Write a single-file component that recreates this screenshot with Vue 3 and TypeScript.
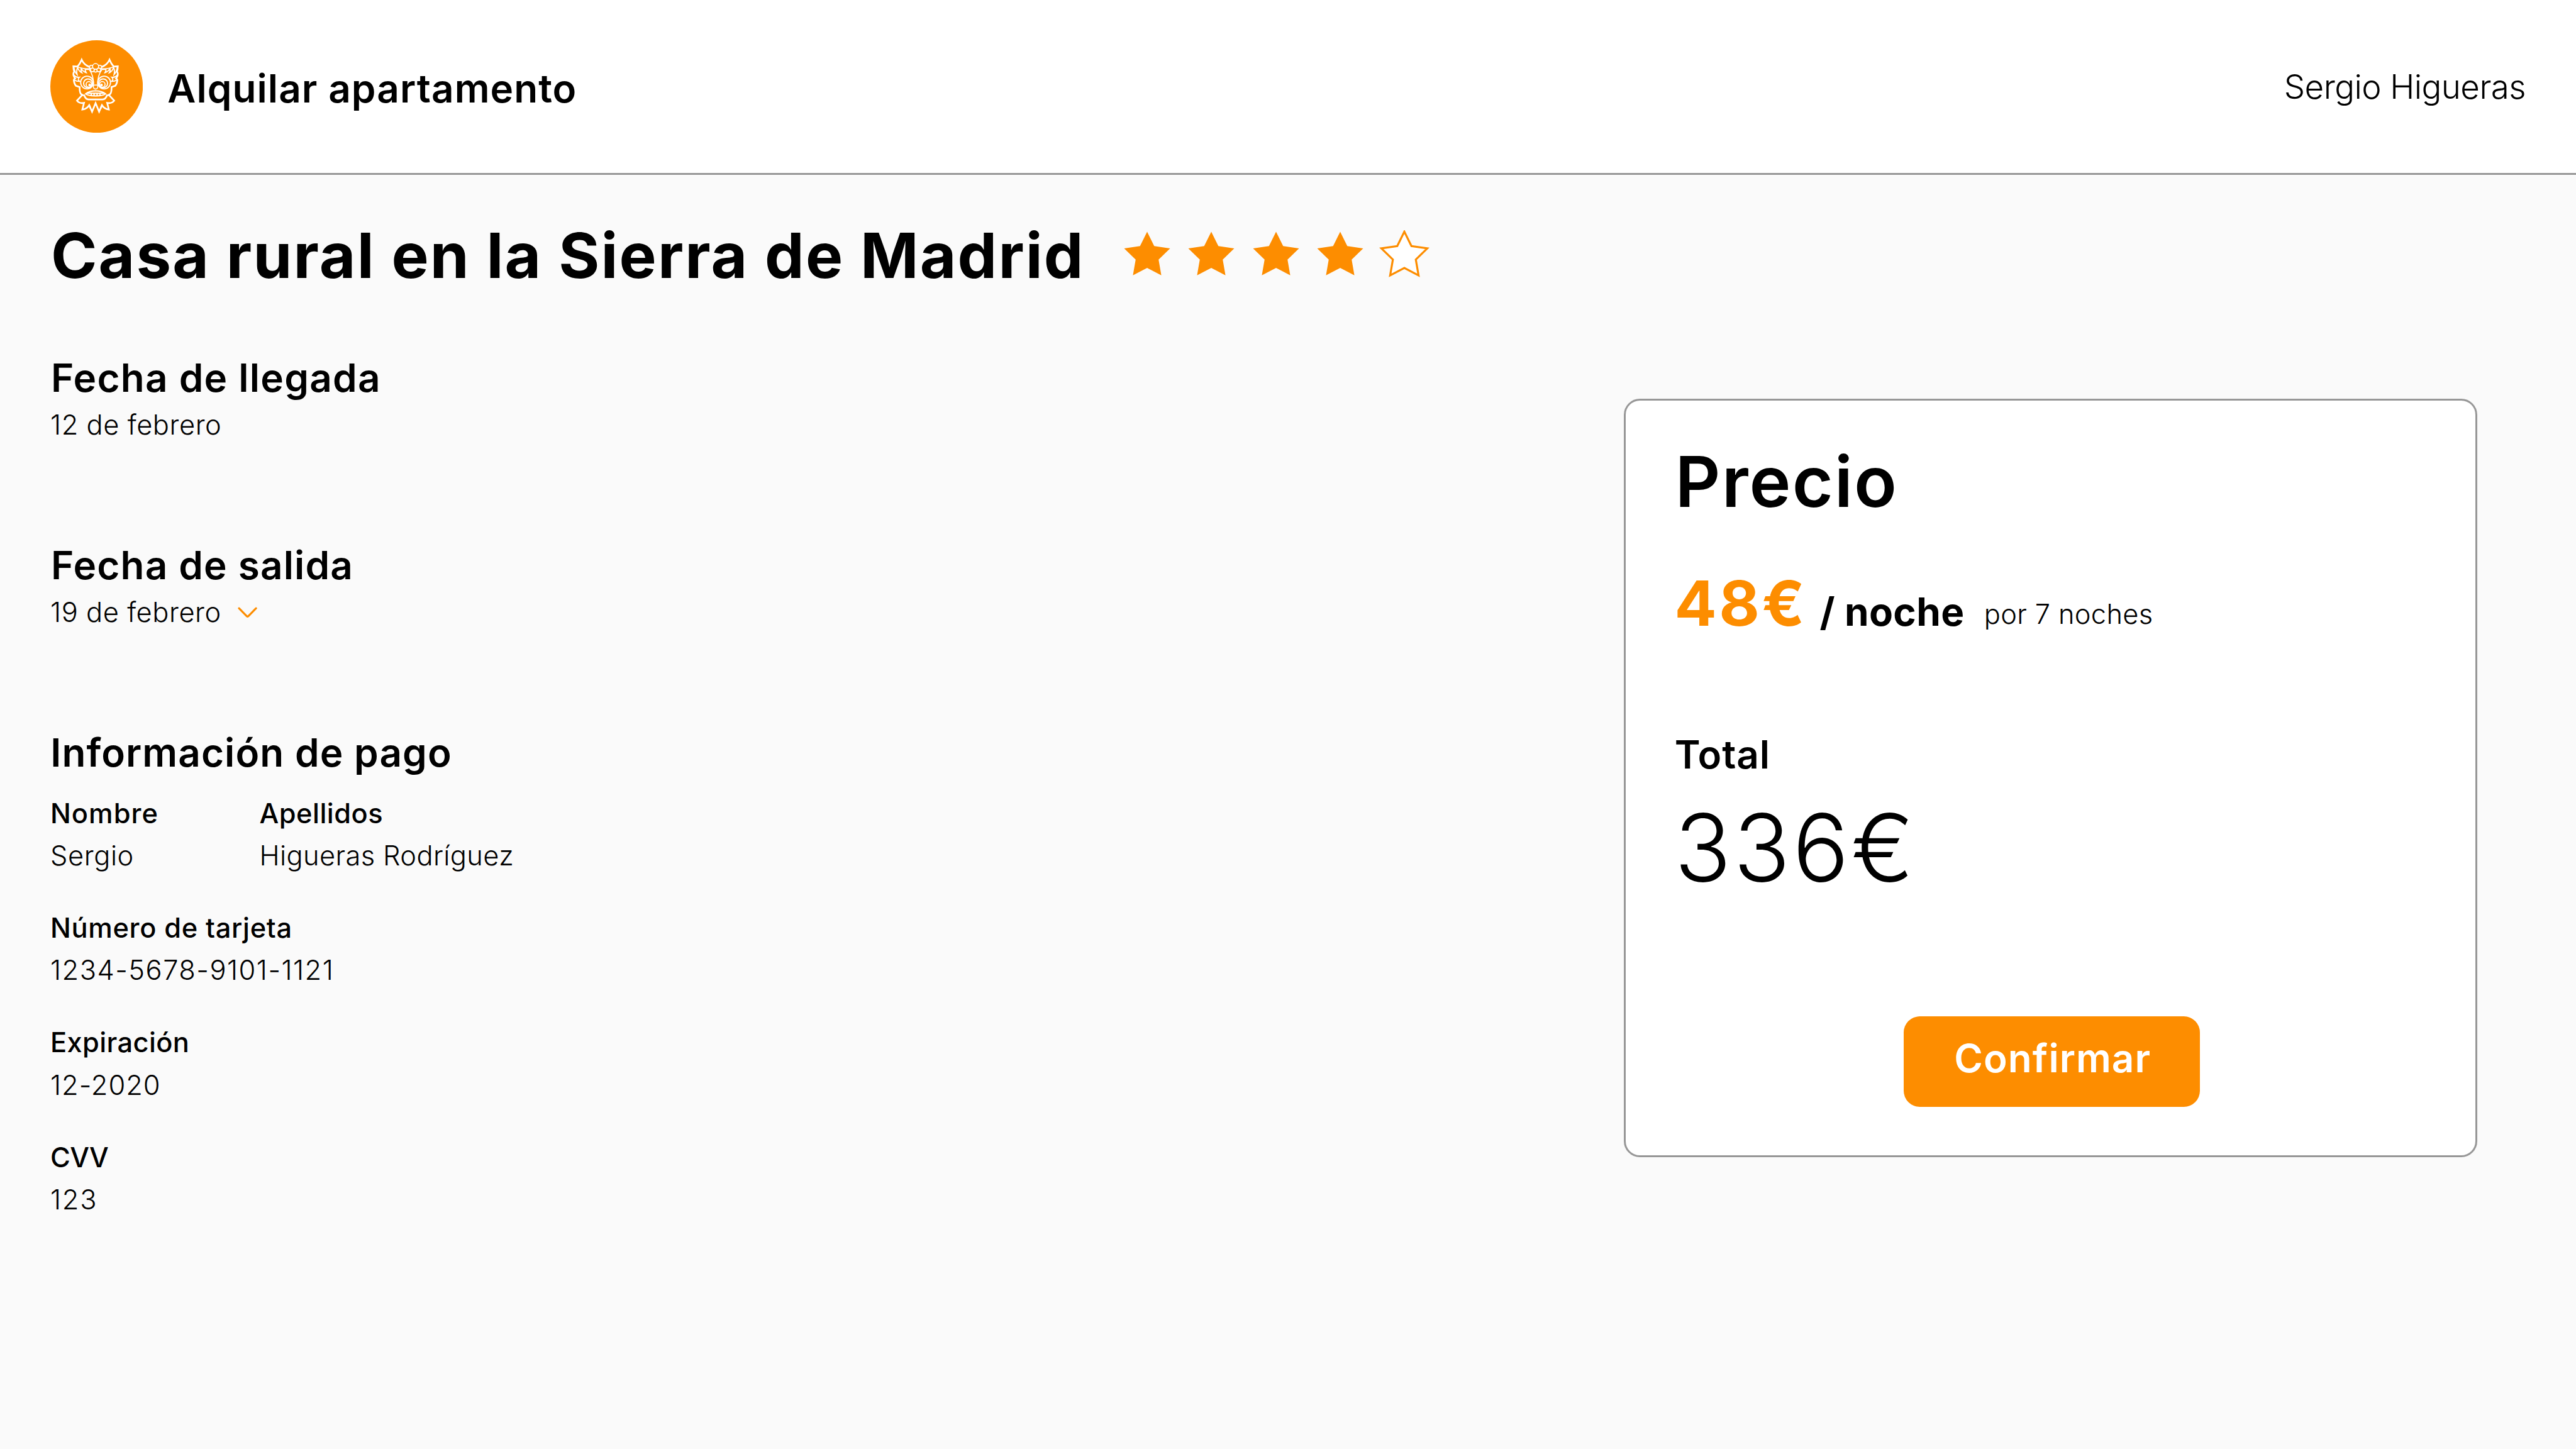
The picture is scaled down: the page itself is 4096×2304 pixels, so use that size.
<script setup lang="ts">
const rating = 4
const stars = [1, 2, 3, 4, 5].map((n) => n <= rating)
const star = 'M0-48L14.1-19.4L45.65-14.8L22.8 7.4L28.2 38.8L0 24L-28.2 38.8L-22.8 7.4L-45.65-14.8L-14.1-19.4Z'
// The mask is symmetrical: one half is drawn twice, the second time mirrored.
const halves = ['', 'translate(600 0) scale(-1 1)']
</script>

<template>
  <div class="page">
    <header class="bar">
      <svg class="logo" viewBox="30 30 552 552">
        <circle cx="306" cy="306" r="276" fill="#fd8d00" />
        <g v-for="half in halves" :key="half" :transform="half" fill="none" stroke="#fff" stroke-linejoin="miter">
          <path stroke-width="10" d="M193 187L167.500 185.500Q168 206 173 217Q166 224 168 238Q172 250 178 258Q170 262 170 268Q173 290 182 301L205 309Q204 338 212 350L224 357" />
          <path stroke-width="10" d="M192 187Q206 172 217 146Q230 176 264 189" />
          <path stroke-width="6" d="M192 189Q226 201 270 200" />
          <path stroke-width="7" d="M170 190Q176 222 190 235Q184 210 193 193Q202 218 218 224Q210 212 214 199Q228 220 244 223Q236 212 238 203M170 238Q184 254 203 251Q190 264 205 275Q188 276 172 266" />
          <path stroke-width="6" d="M238 204H262Q288 238 288 294" />
          <circle cx="249" cy="282" r="38" stroke-width="7" />
          <circle cx="255" cy="287" r="26.500" stroke-width="7" />
          <circle cx="260" cy="293" r="16.500" stroke-width="6.500" />
          <circle cx="265" cy="297" r="8" fill="#fff" stroke="none" />
          <path stroke-width="10" d="M218 358H232Q240 382 258 383H301M220 357L189 390Q204 409 231 403L221 443Q248 440 262 417L270 437" />
          <path stroke-width="7" d="M301 332Q262 332 240 350Q258 363 301 362M248 346H301" />
          <path stroke-width="8" d="M274 346V361M291 346V361" />
        </g>
        <path d="M262 417L279 456L300 405L321 456L338 417" fill="none" stroke="#fff" stroke-width="10" />
        <g fill="#fd8d00" stroke="#fff" stroke-width="6">
          <circle cx="275" cy="190" r="11" />
          <circle cx="325" cy="190" r="11" />
          <circle cx="300" cy="187" r="18" />
          <circle cx="281" cy="207" r="11" />
          <circle cx="319" cy="207" r="11" />
          <circle cx="300" cy="211" r="9" />
          <path d="M284 297H316M288 297Q283 321 300 321Q317 321 312 297" />
        </g>
      </svg>
      <div class="brand">Alquilar apartamento</div>
      <div class="user">Sergio Higueras</div>
    </header>

    <main class="body">
      <section class="details">
        <div class="title-row">
          <h1>Casa rural en la Sierra de Madrid</h1>
          <div class="stars">
            <svg v-for="(on, i) in stars" :key="i" viewBox="-50 -51 100 100">
              <path :d="star" :fill="on ? '#fd8d00' : '#fff'" :stroke="on ? 'none' : '#fd8d00'" stroke-width="4" />
            </svg>
          </div>
        </div>

        <div class="block">
          <h2 class="arrival">Fecha de llegada</h2>
          <p class="value date">12 de febrero</p>
        </div>
        <div class="block">
          <h2 class="departure">Fecha de salida</h2>
          <p class="value date picker">
            <span>19 de febrero</span>
            <svg viewBox="470 1200 44 40"><path d="M475 1211.5L490.5 1227.2Q492 1228.4 493.5 1227.2L509 1211.5" fill="none" stroke="#fd8d00" stroke-width="4" stroke-linecap="round" /></svg>
          </p>
        </div>

        <div class="payment">
          <h2>Información de pago</h2>
          <div class="fields">
            <div class="pair">
              <div class="field first"><h3 class="name">Nombre</h3><p class="value short">Sergio</p></div>
              <div class="field"><h3 class="surname">Apellidos</h3><p class="value">Higueras Rodríguez</p></div>
            </div>
            <div class="field"><h3 class="number">Número de tarjeta</h3><p class="value digits">1234-5678-9101-1121</p></div>
            <div class="field"><h3>Expiración</h3><p class="value expiry">12-2020</p></div>
            <div class="field"><h3 class="cvv">CVV</h3><p class="value code">123</p></div>
          </div>
        </div>
      </section>

      <aside class="card">
        <h2 class="price-title">Precio</h2>
        <div class="price">
          <span class="amount">48€</span>
          <span class="per">/ noche</span>
          <span class="nights">por 7 noches</span>
        </div>
        <h2 class="total">Total</h2>
        <div class="sum">336€</div>
        <button class="confirm">Confirmar</button>
      </aside>
    </main>
  </div>
</template>

<style>
body {
  background: #fafafa;
}
</style>

<style scoped>
.page {
  width: 4096px;
  height: 2304px;
  overflow: hidden;
  background: #fafafa;
  color: #000;
  font-family: Inter, 'Liberation Sans', sans-serif;
  white-space: nowrap;
}
h1, h2, h3, p { margin: 0; }
.bar {
  box-sizing: border-box;
  display: flex;
  align-items: flex-start;
  height: 278.4px;
  padding: 64px 80px 0;
  background: #fff;
  border-bottom: 3.2px solid #979797;
}
.logo {
  flex: none;
  width: 147.2px;
  height: 147.2px;
}
.brand {
  margin: 36.7px 0 0 39.1px;
  font: 600 62px/80px Inter, sans-serif;
  letter-spacing: 1.07px;
}
.user {
  margin: 43.8px 0 0 auto;
  font: 300 52.8px/60px Inter, sans-serif;
  letter-spacing: -0.55px;
}
.body {
  display: flex;
}
.details {
  width: 2502.4px;
  padding: 67.2px 0 0 80px;
}
.title-row {
  display: flex;
  align-items: center;
  height: 120px;
  margin-bottom: 95.9px;
}
h1 {
  flex: none;
  width: 1702.9px;
  padding-left: 0.9px;
  font: 700 99.4px/120px Inter, sans-serif;
  letter-spacing: 2.16px;
}
.stars {
  display: flex;
  gap: 22.4px;
}
.stars svg {
  width: 80px;
  height: 80px;
}
h2 {
  padding-left: 0.3px;
  font: 600 62px/80px Inter, sans-serif;
  letter-spacing: 1.07px;
}
.arrival {
  padding-left: 0.9px;
  letter-spacing: 1.23px;
}
.departure {
  padding-left: 0.9px;
  letter-spacing: 1.16px;
}
h3 {
  font: 500 43.4px/56px Inter, sans-serif;
  letter-spacing: 0.37px;
}
.name { letter-spacing: 1.02px; }
.surname { letter-spacing: 0.46px; }
.number { letter-spacing: 0.65px; }
.cvv { letter-spacing: -0.59px; }
.value {
  font: 300 43.4px/56px Inter, sans-serif;
  letter-spacing: 0.37px;
}
.date { letter-spacing: 0.55px; }
.short { letter-spacing: 0.58px; }
.digits { letter-spacing: 1.48px; }
.expiry { letter-spacing: 0.97px; }
.code { letter-spacing: 1.79px; }
.block {
  display: flex;
  flex-direction: column;
  gap: 5.7px;
  margin-bottom: 155.9px;
}
.picker {
  display: flex;
}
.picker span {
  width: 296px;
}
.picker svg {
  width: 35.2px;
  height: 32px;
  margin-top: 12.8px;
}
.fields {
  display: flex;
  flex-direction: column;
  gap: 59.2px;
  margin-top: 28.1px;
}
.pair {
  display: flex;
}
.first {
  width: 332.6px;
}
.field {
  display: flex;
  flex-direction: column;
  gap: 11.2px;
}
.card {
  box-sizing: border-box;
  width: 1356.8px;
  height: 1206.4px;
  margin-top: 355.2px;
  padding: 64.3px 0 0 77px;
  background: #fff;
  border: 3.2px solid #979797;
  border-radius: 25.6px;
}
.price-title {
  padding-left: 1.2px;
  font-size: 111.7px;
  line-height: 130px;
  letter-spacing: 2.04px;
}
.price {
  display: flex;
  height: 120px;
  margin-top: 68.3px;
}
.amount {
  width: 231.2px;
  color: #fd8d00;
  font: 700 99.4px/120px Inter, sans-serif;
  letter-spacing: 3.54px;
}
.per {
  width: 261.2px;
  margin-top: 33.5px;
  font: 700 62px/80px Inter, sans-serif;
  letter-spacing: 0.35px;
}
.nights {
  margin-top: 48.8px;
  font: 300 43.4px/56px Inter, sans-serif;
  letter-spacing: 0.34px;
}
.total {
  margin-top: 140.7px;
  letter-spacing: 0.84px;
}
.sum {
  margin-top: 17.7px;
  font: 300 149px/180px Inter, sans-serif;
  letter-spacing: 3.59px;
}
.confirm {
  display: block;
  box-sizing: border-box;
  width: 470.4px;
  height: 144px;
  margin: 178.4px 0 0 364.8px;
  padding: 27.1px 0 36.9px 80.1px;
  background: #fd8d00;
  border: 0;
  border-radius: 25.6px;
  color: #fff;
  font: 600 62px/80px Inter, sans-serif;
  letter-spacing: 1.07px;
  text-align: left;
}
</style>
